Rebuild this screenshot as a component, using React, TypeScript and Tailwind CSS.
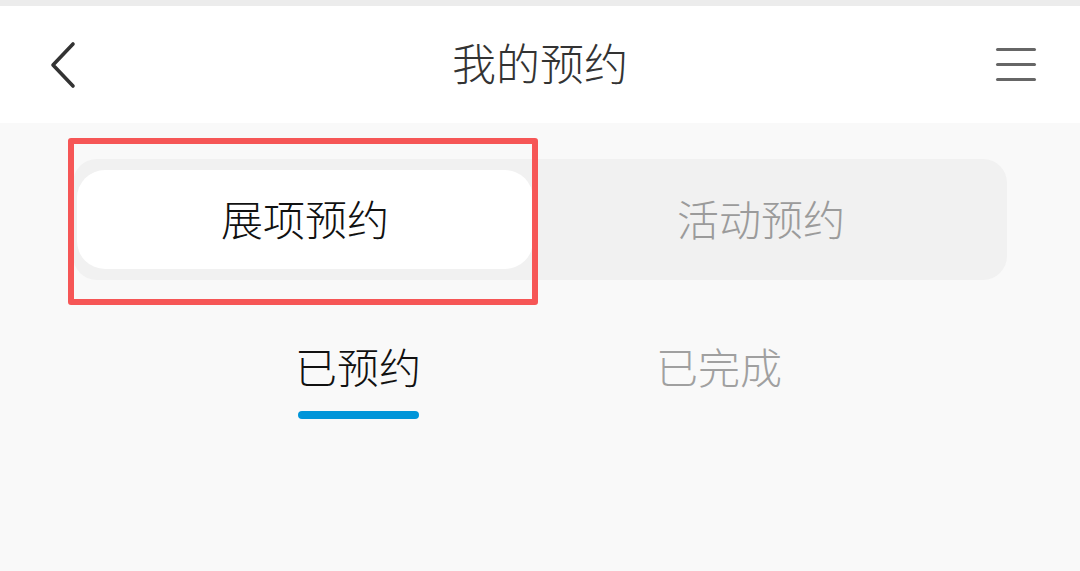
import React from 'react'

const font = { fontFamily: '"Noto Sans CJK SC", "Noto Sans", sans-serif' }

function BackIcon() {
  return (
    <svg width="30" height="48" viewBox="0 0 30 48" fill="none">
      <path d="M25 3 L5 24 L25 45" stroke="#333333" strokeWidth="3.6" strokeLinecap="round" strokeLinejoin="round" />
    </svg>
  )
}

function MenuIcon() {
  return (
    <div className="flex w-[40px] flex-col gap-[12px]">
      <span className="h-[3px] w-full rounded-full bg-[#666666]" />
      <span className="h-[3px] w-full rounded-full bg-[#666666]" />
      <span className="h-[3px] w-full rounded-full bg-[#666666]" />
    </div>
  )
}

export default function App() {
  return (
    <div className="relative h-[571px] w-[1080px] overflow-hidden bg-[#f9f9f9] font-light" style={font}>
      <div className="h-[6px] bg-[#ececec]" />
      <header className="grid h-[117px] grid-cols-[1fr_auto_1fr] items-center bg-white px-[48px] pr-[44px]">
        <div className="flex items-center">
          <BackIcon />
        </div>
        <h1 className="pb-[6px] pr-[4px] text-[44px] leading-none font-light text-[#333333]">我的预约</h1>
        <div className="flex justify-end">
          <MenuIcon />
        </div>
      </header>

      <div className="mt-[36px] ml-[73px] grid h-[121px] w-[934px] grid-cols-[456px_456px] items-center rounded-[24px] bg-[#f1f1f1] pl-[4px]">
        <div className="flex h-[99px] items-center justify-center rounded-[28px] bg-white pb-[4px] text-[42px] leading-none text-[#111111]">
          展项预约
        </div>
        <div className="flex h-[99px] items-center justify-center pb-[4px] text-[42px] leading-none text-[#9b9b9b]">
          活动预约
        </div>
      </div>

      <div className="mt-[65px] ml-[177px] flex">
        <div className="flex w-[362px] flex-col items-center">
          <span className="text-[42px] leading-none text-[#111111]">已预约</span>
          <span className="mt-[24px] h-[8px] w-[121px] rounded-full bg-[#0095d9]" />
        </div>
        <div className="flex w-[360px] flex-col items-center">
          <span className="text-[42px] leading-none text-[#a0a0a0]">已完成</span>
        </div>
      </div>

      {/* annotation box */}
      <div className="absolute top-[138px] left-[68px] h-[167px] w-[470px] rounded-[3px] border-[6px] border-[#f65656]" />
    </div>
  )
}
